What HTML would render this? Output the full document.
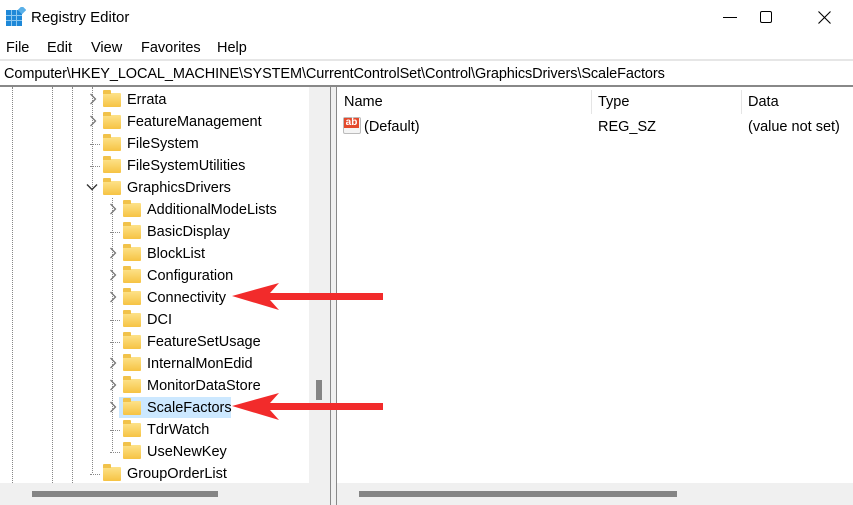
<!DOCTYPE html>
<html><head><meta charset="utf-8"><style>
*{margin:0;padding:0;box-sizing:border-box}
body{width:853px;height:505px;overflow:hidden;background:#fff;font-family:"Liberation Sans",sans-serif;font-size:14.5px;color:#000;position:relative}
.a{position:absolute;white-space:nowrap}
.vd{position:absolute;width:0;border-left:1px dotted #888}
.hd{position:absolute;height:0;border-top:1px dotted #888;width:10px}
.f{position:absolute;width:18px;height:14px;background:linear-gradient(#fde28a,#f6c344);border-radius:1px;z-index:1}
.f:before{content:"";position:absolute;left:0;top:-3px;width:8px;height:4px;background:#f1c24a;border-radius:1px 1px 0 0}
.ch{position:absolute}
</style></head><body>
<svg class="a" style="left:6px;top:7px" width="20" height="20" viewBox="0 0 20 20">
<rect x="0" y="3" width="16" height="16" fill="#1e88d8"/>
<g stroke="#8cc8f0" stroke-width="1"><line x1="5.5" y1="3" x2="5.5" y2="19"/><line x1="10.5" y1="3" x2="10.5" y2="19"/><line x1="0" y1="8.5" x2="16" y2="8.5"/><line x1="0" y1="13.5" x2="16" y2="13.5"/></g>
<rect x="13" y="0" width="6" height="6" fill="#5ab0e8" transform="rotate(45 16 3)"/></svg>
<div class="a" style="left:31px;top:9px;font-size:15px">Registry Editor</div>
<div class="a" style="left:723px;top:17px;width:14px;border-top:1px solid #000"></div>
<div class="a" style="left:760px;top:11px;width:12px;height:12px;border:1px solid #000;border-radius:2px"></div>
<svg class="a" style="left:818px;top:11px" width="13" height="13"><path d="M0.5 0.5L12.5 12.5M12.5 0.5L0.5 12.5" stroke="#000" stroke-width="1.1"/></svg>
<div class="a" style="left:6px;top:40px">File</div>
<div class="a" style="left:47px;top:40px">Edit</div>
<div class="a" style="left:91px;top:40px">View</div>
<div class="a" style="left:141px;top:40px">Favorites</div>
<div class="a" style="left:217px;top:40px">Help</div>
<div class="a" style="left:0;top:59px;width:853px;height:2px;background:#e6e6e6"></div>
<div class="a" style="left:4px;top:66px;letter-spacing:-0.1px">Computer\HKEY_LOCAL_MACHINE\SYSTEM\CurrentControlSet\Control\GraphicsDrivers\ScaleFactors</div>
<div class="a" style="left:0;top:85px;width:853px;height:2px;background:#888"></div>
<div class="vd" style="left:12px;top:87px;height:396px"></div>
<div class="vd" style="left:52px;top:87px;height:396px"></div>
<div class="vd" style="left:72px;top:87px;height:396px"></div>
<div class="vd" style="left:92px;top:87px;height:386px"></div>
<div class="vd" style="left:112px;top:198px;height:253px"></div>
<div class="a" style="left:119px;top:397px;width:112px;height:21px;background:#cce8ff"></div>
<div id="t"></div>
<div class="a" style="left:309px;top:87px;width:21px;height:396px;background:#f0f0f0"></div>
<div class="a" style="left:316px;top:380px;width:6px;height:20px;background:#858585"></div>
<div class="a" style="left:0;top:483px;width:330px;height:22px;background:#f0f0f0"></div>
<div class="a" style="left:32px;top:491px;width:186px;height:6px;background:#858585"></div>
<div class="a" style="left:330px;top:87px;width:1px;height:418px;background:#888"></div>
<div class="a" style="left:336px;top:87px;width:1px;height:418px;background:#888"></div>
<div class="a" style="left:331px;top:87px;width:5px;height:418px;background:#f0f0f0"></div>
<div class="a" style="left:337px;top:483px;width:516px;height:22px;background:#f0f0f0"></div>
<div class="a" style="left:359px;top:491px;width:318px;height:6px;background:#858585"></div>
<div class="a" style="left:344px;top:94px">Name</div>
<div class="a" style="left:591px;top:90px;width:1px;height:24px;background:#e5e5e5"></div>
<div class="a" style="left:598px;top:94px">Type</div>
<div class="a" style="left:741px;top:90px;width:1px;height:24px;background:#e5e5e5"></div>
<div class="a" style="left:748px;top:94px">Data</div>
<div class="a" style="left:343px;top:117px;width:18px;height:17px;background:#f4f4f4;border:1px solid #bbb;border-radius:2px"></div>
<div class="a" style="left:344px;top:118px;width:15px;height:10px;background:#e4492c;color:#fff;font-size:10px;font-weight:bold;line-height:10px;text-align:center">ab</div>
<div class="a" style="left:364px;top:119px">(Default)</div>
<div class="a" style="left:598px;top:119px">REG_SZ</div>
<div class="a" style="left:748px;top:119px">(value not set)</div>
<svg class="a" style="left:0;top:0" width="853" height="505">
<g fill="#f22b2b"><polygon points="232,296 279,283 270,293 383,293 383,300 270,300 279,310"/>
<polygon points="232,406 279,393 270,403 383,403 383,410 270,410 279,420"/></g></svg>
<script>
var items=[[1,'c','Errata'],[1,'c','FeatureManagement'],[1,'d','FileSystem'],[1,'d','FileSystemUtilities'],[1,'o','GraphicsDrivers'],
[2,'c','AdditionalModeLists'],[2,'d','BasicDisplay'],[2,'c','BlockList'],[2,'c','Configuration'],[2,'c','Connectivity'],[2,'d','DCI'],[2,'d','FeatureSetUsage'],[2,'c','InternalMonEdid'],[2,'c','MonitorDataStore'],[2,'c','ScaleFactors'],[2,'d','TdrWatch'],[2,'d','UseNewKey'],[1,'d','GroupOrderList']];
var h='';items.forEach(function(it,i){var cy=99+22*i,l=it[0],fx=l==1?103:123,tx=fx+24,cx=fx-11;
if(it[1]=='c')h+='<svg class="ch" style="left:'+(cx-3)+'px;top:'+(cy-6)+'px" width="8" height="12"><path d="M1.5 1L6.5 6L1.5 11" fill="none" stroke="#777" stroke-width="1.3"/></svg>';
else if(it[1]=='o')h+='<svg class="ch" style="left:'+(cx-6)+'px;top:'+(cy-4)+'px" width="12" height="8"><path d="M1 1.5L6 6.5L11 1.5" fill="none" stroke="#333" stroke-width="1.4"/></svg>';
else h+='<div class="hd" style="left:'+(cx-2)+'px;top:'+(cy+1)+'px"></div>';
h+='<div class="f" style="left:'+fx+'px;top:'+(cy-6)+'px"></div><div class="a" style="left:'+tx+'px;top:'+(cy-7)+'px;z-index:2">'+it[2]+'</div>';});
document.getElementById('t').innerHTML=h;
</script>
</body></html>
